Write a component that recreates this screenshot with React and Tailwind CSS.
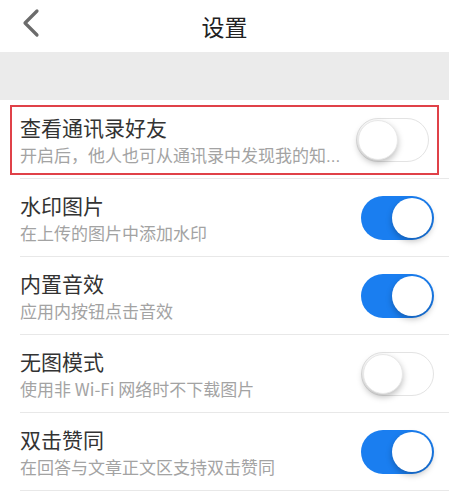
import React from 'react'

const rows = [
  { title: '水印图片', sub: '在上传的图片中添加水印', on: true },
  { title: '内置音效', sub: '应用内按钮点击音效', on: true },
  { title: '无图模式', sub: '使用非 Wi-Fi 网络时不下载图片', on: false },
  { title: '双击赞同', sub: '在回答与文章正文区支持双击赞同', on: true },
]

function Toggle({ on }) {
  return (
    <div
      className={
        on
          ? 'relative w-[73px] h-[44px] shrink-0 rounded-full bg-[#1a7ef0]'
          : 'relative w-[73px] h-[44px] shrink-0 rounded-full bg-white border border-[#e3e3e3]'
      }
    >
      <div
        className={
          on
            ? 'absolute top-[2px] right-[2px] w-[40px] h-[40px] rounded-full bg-white shadow-[0_3px_6px_rgba(0,0,0,0.25)]'
            : 'absolute top-[1px] left-[1px] w-[40px] h-[40px] rounded-full bg-white shadow-[0_3px_6px_rgba(0,0,0,0.25)] border border-[#e8e8e8]'
        }
      />
    </div>
  )
}

function Text({ title, sub }) {
  return (
    <div className="flex flex-col min-w-0">
      <span className="text-[21px] leading-[30px] text-[#333]">{title}</span>
      <span className="text-[17px] leading-[25px] text-[#a3a3a3] whitespace-nowrap">{sub}</span>
    </div>
  )
}

export default function App() {
  return (
    <div
      className="w-[449px] h-[495px] bg-white overflow-hidden"
      style={{ fontFamily: '"Noto Sans CJK SC", "Noto Sans", sans-serif' }}
    >
      {/* header */}
      <div className="relative h-[52px] flex items-center justify-center">
        <svg className="absolute left-[20px] top-[8px]" width="22" height="30" viewBox="0 0 22 30">
          <path d="M17 3 L5 15 L17 27" fill="none" stroke="#6b6b6b" strokeWidth="3.2" strokeLinecap="round" strokeLinejoin="round" />
        </svg>
        <span className="text-[23px] text-[#222]">设置</span>
      </div>
      <div className="h-[48px] bg-[#ebebeb]" />

      {/* highlighted row */}
      <div className="px-[10px] pt-[5px] pb-[3px]">
        <div className="h-[70px] border-2 border-[#e04148] flex items-center justify-between pl-[8px] pr-[8px]">
          <Text
            title="查看通讯录好友"
            sub={
              <>
                开启后，他人也可从通讯录中发现我的知
                <span style={{ fontFamily: '"Liberation Sans", sans-serif' }}>...</span>
              </>
            }
          />
          <div className="ml-[6px]">
            <Toggle on={false} />
          </div>
        </div>
      </div>
      <div className="ml-[20px] border-b border-[#e8e8e8]" />

      {rows.map((r) => (
        <div key={r.title} className="ml-[20px] h-[78px] pr-[15px] flex items-center justify-between border-b border-[#e8e8e8]">
          <Text title={r.title} sub={r.sub} />
          <Toggle on={r.on} />
        </div>
      ))}
    </div>
  )
}
